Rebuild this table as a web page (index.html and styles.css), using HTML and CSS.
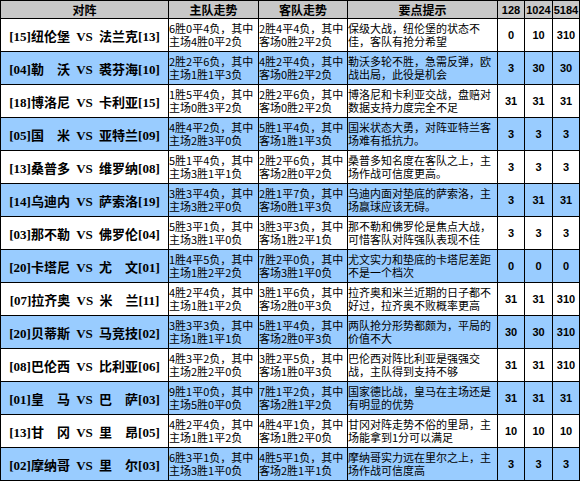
FILE: index.html
```html
<!DOCTYPE html>
<html lang="zh-CN">
<head>
<meta charset="utf-8">
<title>对阵</title>
<link rel="stylesheet" href="styles.css">
</head>
<body>
<table class="tbl">
<colgroup>
<col class="c-match"><col class="c-home"><col class="c-away"><col class="c-tip"><col class="c-n"><col class="c-n2"><col class="c-n">
</colgroup>
<thead>
<tr class="head">
<th class="h-cjk">对阵</th><th class="h-cjk">主队走势</th><th class="h-cjk">客队走势</th><th class="h-cjk">要点提示</th><th class="h-num">128</th><th class="h-num">1024</th><th class="h-num">5184</th>
</tr>
</thead>
<tbody>
<tr class="odd"><td class="match">[15]纽伦堡 VS 法兰克[13]</td><td class="txt">6胜0平4负，其中主场4胜0平2负</td><td class="txt">2胜4平4负，其中客场0胜2平2负</td><td class="tip">保级大战，纽伦堡的状态不佳，客队有抢分希望</td><td class="num">0</td><td class="num">10</td><td class="num">310</td></tr>
<tr class="even"><td class="match">[04]勒　沃 VS 裘芬海[10]</td><td class="txt">2胜2平6负，其中主场1胜1平3负</td><td class="txt">4胜2平4负，其中客场0胜2平2负</td><td class="tip">勒沃多轮不胜，急需反弹，欧战出局，此役是机会</td><td class="num">3</td><td class="num">30</td><td class="num">30</td></tr>
<tr class="odd"><td class="match">[18]博洛尼 VS 卡利亚[15]</td><td class="txt">1胜5平4负，其中主场0胜3平2负</td><td class="txt">2胜2平6负，其中客场0胜2平2负</td><td class="tip">博洛尼和卡利亚交战，盘赔对数据支持力度完全不足</td><td class="num">31</td><td class="num">31</td><td class="num">31</td></tr>
<tr class="even"><td class="match">[05]国　米 VS 亚特兰[09]</td><td class="txt">4胜4平2负，其中主场2胜3平0负</td><td class="txt">5胜1平4负，其中客场1胜1平3负</td><td class="tip">国米状态大勇，对阵亚特兰客场难有抵抗力。</td><td class="num">3</td><td class="num">3</td><td class="num">3</td></tr>
<tr class="odd"><td class="match">[13]桑普多 VS 维罗纳[08]</td><td class="txt">5胜1平4负，其中主场3胜1平1负</td><td class="txt">2胜2平6负，其中客场2胜0平2负</td><td class="tip">桑普多知名度在客队之上，主场作战可信度更高。</td><td class="num">3</td><td class="num">3</td><td class="num">3</td></tr>
<tr class="even"><td class="match">[14]乌迪内 VS 萨索洛[19]</td><td class="txt">3胜3平4负，其中主场3胜2平0负</td><td class="txt">2胜1平7负，其中客场0胜1平3负</td><td class="tip">乌迪内面对垫底的萨索洛，主场赢球应该无碍。</td><td class="num">3</td><td class="num">31</td><td class="num">31</td></tr>
<tr class="odd"><td class="match">[03]那不勒 VS 佛罗伦[04]</td><td class="txt">5胜3平1负，其中主场3胜1平0负</td><td class="txt">3胜3平3负，其中客场1胜2平1负</td><td class="tip">那不勒和佛罗伦是焦点大战，可惜客队对阵强队表现不佳</td><td class="num">3</td><td class="num">3</td><td class="num">3</td></tr>
<tr class="even"><td class="match">[20]卡塔尼 VS 尤　文[01]</td><td class="txt">1胜4平5负，其中主场1胜2平2负</td><td class="txt">7胜2平0负，其中客场3胜1平0负</td><td class="tip">尤文实力和垫底的卡塔尼差距不是一个档次</td><td class="num">0</td><td class="num">0</td><td class="num">0</td></tr>
<tr class="odd"><td class="match">[07]拉齐奥 VS 米　兰[11]</td><td class="txt">4胜2平4负，其中主场1胜1平2负</td><td class="txt">3胜1平6负，其中客场2胜0平3负</td><td class="tip">拉齐奥和米兰近期的日子都不好过，拉齐奥不败概率更高</td><td class="num">31</td><td class="num">31</td><td class="num">310</td></tr>
<tr class="even"><td class="match">[20]贝蒂斯 VS 马竞技[02]</td><td class="txt">3胜3平3负，其中主场1胜1平1负</td><td class="txt">5胜1平4负，其中客场2胜0平3负</td><td class="tip">两队抢分形势都颇为，平局的价值不大</td><td class="num">30</td><td class="num">30</td><td class="num">310</td></tr>
<tr class="odd"><td class="match">[08]巴伦西 VS 比利亚[06]</td><td class="txt">4胜3平2负，其中主场2胜2平0负</td><td class="txt">3胜2平5负，其中客场1胜0平3负</td><td class="tip">巴伦西对阵比利亚是强强交战，主队得到支持不够</td><td class="num">31</td><td class="num">31</td><td class="num">310</td></tr>
<tr class="even"><td class="match">[01]皇　马 VS 巴　萨[03]</td><td class="txt">9胜1平0负，其中主场5胜0平0负</td><td class="txt">7胜1平2负，其中客场2胜1平2负</td><td class="tip">国家德比战，皇马在主场还是有明显的优势</td><td class="num">31</td><td class="num">31</td><td class="num">31</td></tr>
<tr class="odd"><td class="match">[13]甘　冈 VS 里　昂[05]</td><td class="txt">4胜2平4负，其中主场1胜1平2负</td><td class="txt">4胜4平1负，其中客场1胜2平0负</td><td class="tip">甘冈对阵走势不俗的里昂，主场能拿到1分可以满足</td><td class="num">10</td><td class="num">10</td><td class="num">10</td></tr>
<tr class="even"><td class="match">[02]摩纳哥 VS 里　尔[03]</td><td class="txt">6胜3平1负，其中主场3胜1平0负</td><td class="txt">4胜5平1负，其中客场2胜1平1负</td><td class="tip">摩纳哥实力远在里尔之上，主场作战可信度高</td><td class="num">3</td><td class="num">3</td><td class="num">3</td></tr>
</tbody>
</table>
</body>
</html>
```
FILE: styles.css
```css
html, body {
  margin: 0;
  padding: 0;
  background: #ffffff;
}
.tbl {
  border-collapse: collapse;
  table-layout: fixed;
  width: 580px;
  border: 1px solid #000;
  color: #000;
}
.c-match { width: 168px; }
.c-home { width: 90px; }
.c-away { width: 89px; }
.c-tip { width: 150px; }
.c-n { width: 27px; }
.c-n2 { width: 28px; }
.tbl th, .tbl td {
  border: 1px solid #000;
  padding: 0;
  overflow: hidden;
}
.head {
  height: 18px;
  background: #c8c8c8;
}
.h-cjk {
  font-family: "Noto Sans CJK SC", sans-serif;
  font-size: 12px;
  font-weight: bold;
  line-height: 16px;
  text-align: center;
}
.h-num {
  font-family: "Liberation Sans", Arial, sans-serif;
  font-size: 11px;
  font-weight: bold;
  line-height: 16px;
  text-align: center;
}
.odd { height: 33px; background: #ffffff; }
.even { height: 33px; background: #99ccff; }
.match {
  font-family: "Liberation Serif", "Noto Sans CJK SC", serif;
  font-size: 13px;
  font-weight: bold;
  text-align: center;
  white-space: nowrap;
  word-spacing: 3px;
}
.txt, .tip {
  font-family: "Noto Sans CJK SC", sans-serif;
  font-size: 11px;
  line-height: 13px;
  text-align: left;
  padding-left: 3px;
}
.tip {
  padding-right: 2px;
}
.num {
  font-family: "Liberation Sans", Arial, sans-serif;
  font-size: 11px;
  font-weight: bold;
  text-align: center;
}
```
